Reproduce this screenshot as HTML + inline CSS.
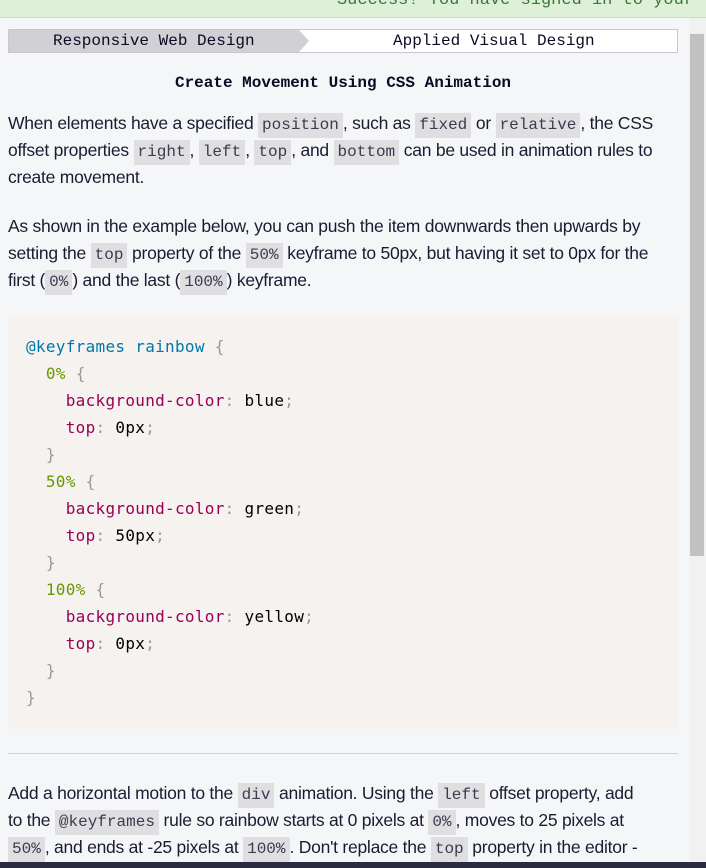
<!DOCTYPE html>
<html><head><meta charset="utf-8"><style>
*{box-sizing:border-box;margin:0;padding:0}
body{width:706px;height:868px;overflow:hidden;background:#f5f6f7;font-family:"Liberation Sans",sans-serif;color:#0a0a23;position:relative}
.top{position:absolute;left:0;top:0;width:706px;height:18px;background:#dff0d8;border-bottom:1px solid #c9dfc0;overflow:hidden}
.top span{position:absolute;right:12px;top:-9px;font-family:"Liberation Mono",monospace;font-size:17px;color:#3c763d}
.bc{position:absolute;left:8px;top:29px;width:670px;height:24px;border:1px solid #c8c8cc;background:#fff;font-family:"Liberation Mono",monospace;font-size:16px}
.bc .a{position:absolute;left:0;top:0;height:22px;width:290px;background:#d0d0d5;line-height:22px;padding-left:44px}
.bc .arr{position:absolute;left:290px;top:0;width:0;height:0;border-top:11px solid transparent;border-bottom:11px solid transparent;border-left:10px solid #d0d0d5}
.bc .b{position:absolute;left:384px;top:0;line-height:22px}
h1{position:absolute;left:0;width:686px;top:74px;text-align:center;font-family:"Liberation Mono",monospace;font-size:16px;font-weight:bold}
.p{position:absolute;left:8px;font-size:17.5px;line-height:27px;letter-spacing:-0.25px;white-space:nowrap;color:#1b1b32}
code{font-family:"Liberation Mono",monospace;font-size:16px;line-height:0;background:#dfdfe2;padding:3px 4px 4px;letter-spacing:0;color:#3b3b4f}
pre{position:absolute;left:8px;top:316px;width:670px;height:413px;background:#f5f2f0;padding:17px 18px;font-family:"DejaVu Sans Mono",monospace;font-size:16px;line-height:27px;color:#000;letter-spacing:0.3px}
.k{color:#07a}.g{color:#690}.pu{color:#905;}.pn{color:#999}
.hr{position:absolute;left:8px;top:753px;width:670px;height:1px;background:#d0d0d5}
.sb{position:absolute;left:689px;top:18px;width:17px;height:844px;background:#f1f1f1}
.th{position:absolute;left:690px;top:34px;width:14px;height:522px;background:#c1c1c1}
.bot{position:absolute;left:0;top:862px;width:706px;height:6px;background:#2a2a40}
</style></head><body>
<div class="top"><span>Success! You have signed in to your</span></div>
<div class="bc"><div class="a">Responsive Web Design</div><div class="arr"></div><div class="b">Applied Visual Design</div></div>
<h1>Create Movement Using CSS Animation</h1>
<div class="p" style="top:110px">When elements have a specified <code>position</code>, such as <code>fixed</code> or <code>relative</code>, the CSS<br>offset properties <code>right</code>, <code>left</code>, <code>top</code>, and <code>bottom</code> can be used in animation rules to<br>create movement.</div>
<div class="p" style="top:213px">As shown in the example below, you can push the item downwards then upwards by<br>setting the <code>top</code> property of the <code>50%</code> keyframe to 50px, but having it set to 0px for the<br>first (<code>0%</code>) and the last (<code>100%</code>) keyframe.</div>
<pre><span class="k">@keyframes rainbow</span> <span class="pn">{</span>
  <span class="g">0%</span> <span class="pn">{</span>
    <span class="pu">background-color</span><span class="pn">:</span> blue<span class="pn">;</span>
    <span class="pu">top</span><span class="pn">:</span> 0px<span class="pn">;</span>
  <span class="pn">}</span>
  <span class="g">50%</span> <span class="pn">{</span>
    <span class="pu">background-color</span><span class="pn">:</span> green<span class="pn">;</span>
    <span class="pu">top</span><span class="pn">:</span> 50px<span class="pn">;</span>
  <span class="pn">}</span>
  <span class="g">100%</span> <span class="pn">{</span>
    <span class="pu">background-color</span><span class="pn">:</span> yellow<span class="pn">;</span>
    <span class="pu">top</span><span class="pn">:</span> 0px<span class="pn">;</span>
  <span class="pn">}</span>
<span class="pn">}</span></pre>
<div class="hr"></div>
<div class="p" style="top:780px">Add a horizontal motion to the <code>div</code> animation. Using the <code>left</code> offset property, add<br>to the <code>@keyframes</code> rule so rainbow starts at 0 pixels at <code>0%</code>, moves to 25 pixels at<br><code>50%</code>, and ends at -25 pixels at <code>100%</code>. Don't replace the <code>top</code> property in the editor -</div>
<div class="sb"></div><div class="th"></div>
<div class="bot"></div>
</body></html>
